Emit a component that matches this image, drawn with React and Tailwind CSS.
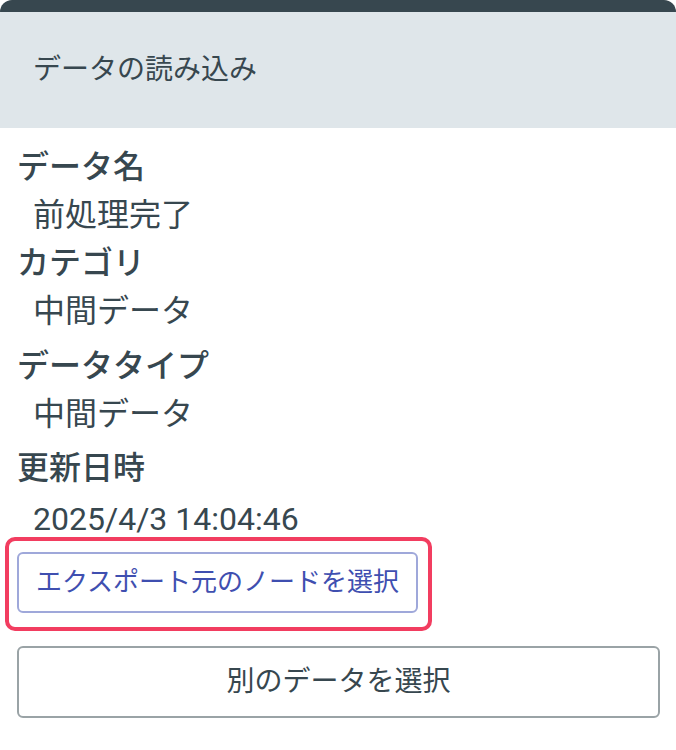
import React from 'react';

const font = { fontFamily: 'Roboto, "Noto Sans CJK JP", sans-serif' };

const fields = [
    { label: 'データ名', value: '前処理完了', gap: 'mt-0' },
    { label: 'カテゴリ', value: '中間データ', gap: 'mt-0' },
    { label: 'データタイプ', value: '中間データ', gap: 'mt-[7px]' },
];

const App = () => {
    return (
        <div className="w-[676px] h-[750px] bg-white" style={font}>
            <div className="rounded-t-xl rounded-b-xl border-t-[12px] border-[#37474f] bg-white h-[750px] overflow-hidden">
                {/* Header */}
                <div className="h-[116px] bg-[#dfe6ea] flex items-center pl-[33px] text-[28px] text-[#37474f]">
                    データの読み込み
                </div>

                {/* Body */}
                <div className="pt-[15px] pl-[17px] pr-[16px] text-[#37474f]">
                    {fields.map((f) => (
                        <div key={f.label} className={f.gap}>
                            <div className="text-[32px] leading-[48px] font-medium">{f.label}</div>
                            <div className="text-[32px] leading-[48px] pl-[16px]">{f.value}</div>
                        </div>
                    ))}
                    <div className="mt-[6px]">
                        <div className="text-[32px] leading-[48px] font-medium">更新日時</div>
                        <div className="text-[32px] leading-[36px] pl-[16px] mt-[9px]">2025/4/3 14:04:46</div>
                    </div>

                    {/* Highlighted action */}
                    <div className="ml-[-12px] w-[427px] border-4 border-[#f23d60] rounded-[10px] pt-[11px] pb-[14px] pl-[8px] pr-[10px]">
                        <button className="w-full h-[61px] border-2 border-[#9fa8da] rounded-md text-[26px] text-[#3f4fb0] bg-white">
                            エクスポート元のノードを選択
                        </button>
                    </div>

                    <button className="mt-[15px] w-[643px] h-[72px] border-2 border-[#9aa3a6] rounded-md text-[28px] text-[#37474f] bg-white">
                        別のデータを選択
                    </button>
                </div>
            </div>
        </div>
    );
};

export default App;
